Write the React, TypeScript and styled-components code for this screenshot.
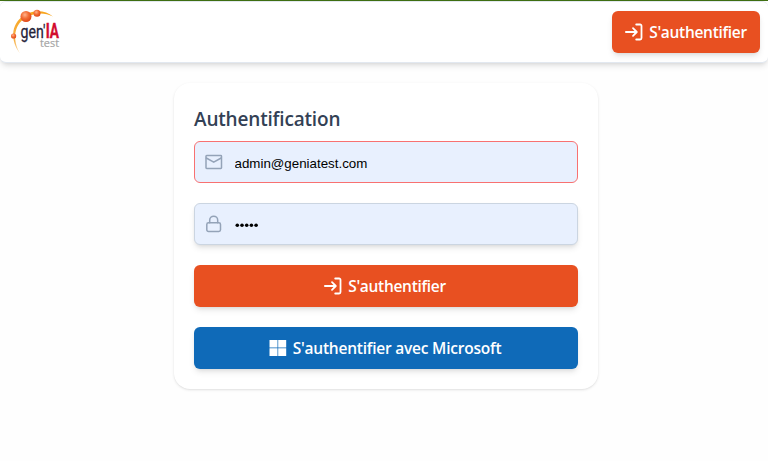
import React from "react";
import styled, { createGlobalStyle, css } from "styled-components";

const GlobalStyle = createGlobalStyle`
  * { box-sizing: border-box; }
  body { margin: 0; background: #fff; font-family: "Open Sans", "Noto Sans", sans-serif; overflow: hidden; }
`;

const Page = styled.div`
  height: 461px;
  border-top: 1px solid #3f6f12;
  background: #fefefe;
`;

const shadow = css`
  box-shadow: 0 4px 6px -1px rgba(0, 0, 0, 0.1), 0 2px 4px -2px rgba(0, 0, 0, 0.1);
`;

const Header = styled.header`
  display: flex;
  align-items: center;
  justify-content: space-between;
  height: 62px;
  padding: 0 8px 0 9px;
  background: #fff;
  border: 1px solid #e2e8f0;
  border-width: 1px 0;
  border-radius: 6px;
  ${shadow}
`;

const LogoSvg = styled.svg`
  display: block;
  width: 54px;
  height: 50px;
  overflow: visible;
`;

const Button = styled.button<{ $tone?: "blue"; $wide?: boolean }>`
  display: flex;
  align-items: center;
  justify-content: center;
  gap: 6px;
  width: ${(p) => (p.$wide ? "100%" : "148px")};
  height: 42px;
  padding: ${(p) => (p.$wide ? "0 2px 0 0" : "0")};
  border: 0;
  border-radius: 6px;
  color: #fff;
  background: ${(p) => (p.$tone === "blue" ? "#0f6ab8" : "#e85021")};
  font: 600 15.5px/24px "Open Sans", sans-serif;
  ${shadow}
`;

const Label = styled.span<{ $spacing: number }>`
  white-space: nowrap;
  letter-spacing: ${(p) => p.$spacing}px;
`;

const Icon = styled.svg<{ $weight?: number }>`
  display: block;
  flex: none;
  fill: none;
  stroke: currentColor;
  stroke-width: ${(p) => p.$weight ?? 1.5};
  stroke-linecap: round;
  stroke-linejoin: round;
`;

const Main = styled.main`
  display: flex;
  justify-content: center;
  padding: 20px 0 0 4px;
`;

const Card = styled.form`
  display: flex;
  flex-direction: column;
  width: 424px;
  height: 306px;
  padding: 20px;
  border-radius: 16px;
  background: #fff;
  box-shadow: 0 1px 3px rgba(0, 0, 0, 0.1), 0 1px 2px -1px rgba(0, 0, 0, 0.1);
`;

const Title = styled.h1`
  margin: 0 0 6px;
  height: 32px;
  color: #334155;
  font: 600 19px/32px "Open Sans", sans-serif;
  letter-spacing: -0.18px;
`;

const Stack = styled.div`
  display: flex;
  flex-direction: column;
  gap: 20px;
`;

const Field = styled.label<{ $invalid?: boolean }>`
  display: flex;
  align-items: center;
  gap: 11.5px;
  height: 42px;
  padding: 0 10px;
  border: 1px solid ${(p) => (p.$invalid ? "#f87171" : "#cbd5e1")};
  border-radius: 6px;
  background: #e8f0fe;
  color: #94a3b8;
  ${(p) => !p.$invalid && shadow}
`;

const Input = styled.input`
  flex: 1;
  min-width: 0;
  height: 30px;
  margin-top: 2px;
  padding: 0;
  border: 0;
  outline: 0;
  background: transparent;
  color: #000;
  font: 13.33px "Liberation Sans", Arial, sans-serif;
`;

const Dots = styled.svg`
  display: block;
  width: 24px;
  height: 6px;
  margin-top: 2px;
  fill: #000;
`;

const LoginIcon = () => (
  <Icon width="18" height="18" viewBox="0 0 18 18" $weight={1.8}>
    <path d="M.9 9h10.6M8 5.2 11.8 9 8 12.8M11.2 1.5h3.9a1.4 1.4 0 0 1 1.4 1.4v12.2a1.4 1.4 0 0 1-1.4 1.4h-3.9" />
  </Icon>
);

const Logo = () => (
  <LogoSvg viewBox="0 0 54 50" role="img" aria-label="gen'IA test">
    <defs>
      <radialGradient id="ball" cx="40%" cy="35%" r="65%">
        <stop offset="0" stopColor="#ffb38c" />
        <stop offset=".5" stopColor="#f36f37" />
        <stop offset="1" stopColor="#df4817" />
      </radialGradient>
      <linearGradient id="arc" x1="0" y1="0" x2="0" y2="1">
        <stop offset="0" stopColor="#f8a51c" />
        <stop offset=".7" stopColor="#f7b24a" />
        <stop offset="1" stopColor="#fbdcae" />
      </linearGradient>
    </defs>
    <path d="M11 46.5C1.5 34 1.5 18 14 9C23 2.5 36 2.5 44 9.5C35 5 25 5.5 16 11C4.5 19 3.5 33 11 46.5Z" fill="url(#arc)" />
    <circle cx="17" cy="9.5" r="5.5" fill="url(#ball)" />
    <circle cx="28" cy="6.2" r="3.5" fill="url(#ball)" />
    <circle cx="4.6" cy="29" r="2.6" fill="url(#ball)" />
    <text x="11.5" y="31.2" fontFamily="Roboto, sans-serif" fontSize="18.5" fill="#25233a" stroke="#25233a" strokeWidth=".3" textLength="25" lengthAdjust="spacingAndGlyphs">gen'</text>
    <text x="36.7" y="31.2" fontFamily="Roboto, sans-serif" fontSize="20" fontWeight="700" fill="#d20c2e" stroke="#d20c2e" strokeWidth=".4" textLength="13.3" lengthAdjust="spacingAndGlyphs">IA</text>
    <text x="31" y="40.2" fontFamily="Open Sans, sans-serif" fontSize="10.8" fill="#a5a5a5" stroke="#a5a5a5" strokeWidth=".2" textLength="19" lengthAdjust="spacingAndGlyphs">test</text>
  </LogoSvg>
);

export default function App() {
  return (
    <>
      <GlobalStyle />
      <Page>
        <Header>
          <Logo />
          <Button type="button">
            <LoginIcon />
            <Label $spacing={-0.3}>S'authentifier</Label>
          </Button>
        </Header>
        <Main>
          <Card>
            <Title>Authentification</Title>
            <Stack>
              <Field $invalid>
                <Icon width="18" height="18" viewBox="0 0 18 18">
                  <rect x="1" y="2.5" width="15.5" height="13" rx=".7" />
                  <path d="m1.3 5 7.4 4.2L16.2 5" />
                </Icon>
                <Input type="text" aria-label="E-mail" defaultValue="admin@geniatest.com" />
              </Field>
              <Field>
                <Icon width="18" height="18" viewBox="0 0 18 18">
                  <rect x="1.8" y="7.8" width="13.7" height="8.7" rx="1.7" />
                  <path d="M4.7 7.8V5.2a4 4 0 0 1 8 0v2.6" />
                </Icon>
                <Dots viewBox="0 0 24 6" role="img" aria-label="Mot de passe">
                  {[2.3, 7, 11.7, 16.4, 21.1].map((x) => (
                    <circle key={x} cx={x} cy="3.3" r="1.8" />
                  ))}
                </Dots>
              </Field>
              <Button type="button" $wide>
                <LoginIcon />
                <Label $spacing={-0.3}>S'authentifier</Label>
              </Button>
              <Button type="button" $wide $tone="blue">
                <Icon width="18" height="18" viewBox="0 0 18 18">
                  <path fill="#fff" stroke="none" d="M.5 1h8v7.5h-8zM9.2 1h8v7.5h-8zM.5 9.3h8V17h-8zM9.2 9.3h8V17h-8z" />
                </Icon>
                <Label $spacing={-0.22}>S'authentifier avec Microsoft</Label>
              </Button>
            </Stack>
          </Card>
        </Main>
      </Page>
    </>
  );
}
